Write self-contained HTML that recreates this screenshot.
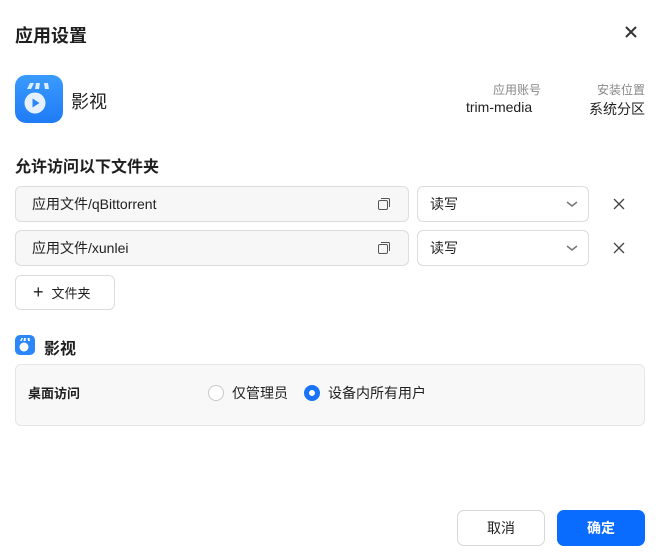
<!DOCTYPE html>
<html><head><meta charset="utf-8"><style>
*{box-sizing:border-box;margin:0;padding:0}
body{width:658px;height:555px;background:#fff;font-family:"Liberation Sans","Noto Sans CJK SC",sans-serif;color:#1f1f1f;position:relative;overflow:hidden}
.a{position:absolute}
.t{font-size:14px}
.inp{position:absolute;left:15px;width:394px;height:36px;border:1px solid #dcdcdc;border-radius:6px;background:#f7f7f7;font-size:14px;padding-left:16px;line-height:34px}
.sel{position:absolute;left:417px;width:172px;height:36px;border:1px solid #dcdcdc;border-radius:6px;background:#fff;font-size:14px;padding-left:12px;line-height:34px}
</style></head><body>
<div class="a" style="left:15px;top:22px;font-size:18px;font-weight:bold">应用设置</div>
<svg class="a" style="left:624px;top:25px" width="14" height="14"><path d="M2 2L12 12M12 2L2 12" stroke="#333" stroke-width="2"/></svg>
<div class="a" style="left:15px;top:75px;width:48px;height:48px;border-radius:11px;background:linear-gradient(180deg,#3a9bff,#1f7bf5)"></div>
<svg class="a" style="left:15px;top:75px" width="48" height="48"><path d="M12 14l3-6h4l-3 6zM21 8h4l-1 6h-4zM29 8h4l1 6h-4z" fill="#dfeeff"/><circle cx="20" cy="28" r="10.5" fill="#e6f1ff"/><path d="M17.5 23.5l7 4.5-7 4.5z" fill="#2b86f8"/></svg>
<div class="a" style="left:71px;top:88px;font-size:18px">影视</div>
<div class="a" style="left:493px;top:81px;font-size:12px;color:#888">应用账号</div>
<div class="a" style="left:466px;top:99px;font-size:14px">trim-media</div>
<div class="a" style="left:597px;top:81px;font-size:12px;color:#888">安装位置</div>
<div class="a" style="left:589px;top:99px;font-size:14px">系统分区</div>
<div class="a" style="left:15px;top:153px;font-size:16px;font-weight:bold">允许访问以下文件夹</div>
<div class="inp" style="top:186px">应用文件/qBittorrent</div>
<div class="inp" style="top:230px">应用文件/xunlei</div>
<svg class="a" style="left:377px;top:197px" width="14" height="14"><rect x="1.5" y="3.5" width="9" height="9" rx="1.5" fill="none" stroke="#555"/><path d="M4 1.5h7.5a1 1 0 0 1 1 1V10" fill="none" stroke="#555"/></svg>
<svg class="a" style="left:377px;top:241px" width="14" height="14"><rect x="1.5" y="3.5" width="9" height="9" rx="1.5" fill="none" stroke="#555"/><path d="M4 1.5h7.5a1 1 0 0 1 1 1V10" fill="none" stroke="#555"/></svg>
<div class="sel" style="top:186px">读写</div>
<div class="sel" style="top:230px">读写</div>
<svg class="a" style="left:565px;top:199px" width="14" height="10"><path d="M2 3l5 4 5-4" fill="none" stroke="#777" stroke-width="1.5"/></svg>
<svg class="a" style="left:565px;top:243px" width="14" height="10"><path d="M2 3l5 4 5-4" fill="none" stroke="#777" stroke-width="1.5"/></svg>
<svg class="a" style="left:613px;top:198px" width="12" height="12"><path d="M1 1L11 11M11 1L1 11" stroke="#444" stroke-width="1.3"/></svg>
<svg class="a" style="left:613px;top:242px" width="12" height="12"><path d="M1 1L11 11M11 1L1 11" stroke="#444" stroke-width="1.3"/></svg>
<div class="a" style="left:15px;top:275px;width:100px;height:35px;border:1px solid #dcdcdc;border-radius:6px;font-size:13px;line-height:33px;padding-left:17px"><span style="font-size:18px;font-weight:300;margin-right:8px">+</span>文件夹</div>
<div class="a" style="left:15px;top:335px;width:20px;height:20px;border-radius:5px;background:#2b86f8"></div>
<svg class="a" style="left:15px;top:335px" width="20" height="20"><path d="M5 6l1.5-3h1.5l-1.5 3zM9 3h2l-.5 3H8.5zM12.5 3h2l.5 3h-2z" fill="#fff"/><circle cx="9" cy="12" r="4.5" fill="#fff"/></svg>
<div class="a" style="left:44px;top:335px;font-size:16px;font-weight:bold">影视</div>
<div class="a" style="left:15px;top:364px;width:630px;height:62px;border:1px solid #e6e6e6;border-radius:6px;background:#f8f8f8"></div>
<div class="a t" style="left:28px;top:383px;font-size:13px;font-weight:bold">桌面访问</div>
<div class="a" style="left:208px;top:385px;width:16px;height:16px;border:1px solid #c8c8c8;border-radius:50%;background:#fff"></div>
<div class="a t" style="left:232px;top:383px">仅管理员</div>
<div class="a" style="left:304px;top:385px;width:16px;height:16px;border:5px solid #1a73f5;border-radius:50%;background:#fff"></div>
<div class="a t" style="left:328px;top:383px">设备内所有用户</div>
<div class="a" style="left:457px;top:510px;width:88px;height:36px;border:1px solid #d6d6d6;border-radius:7px;text-align:center;line-height:34px;font-size:14px">取消</div>
<div class="a" style="left:557px;top:510px;width:88px;height:36px;background:#0a6cff;border-radius:7px;text-align:center;line-height:36px;font-size:14px;color:#fff;font-weight:bold">确定</div>
</body></html>
